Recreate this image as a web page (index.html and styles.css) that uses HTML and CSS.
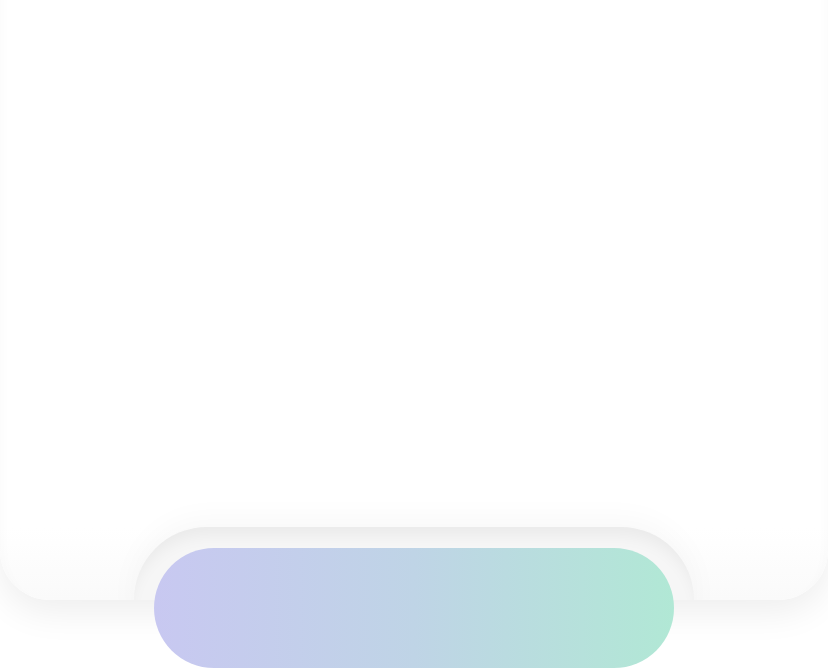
FILE: index.html
```html
<!DOCTYPE html>
<html>
<head>
<meta charset="utf-8">
<link rel="stylesheet" href="styles.css">
</head>
<body>
<div class="page">
  <div class="card">
    <div class="notch"></div>
  </div>
  <div class="action"></div>
</div>
</body>
</html>
```
FILE: styles.css
```css
html, body {
  margin: 0;
  padding: 0;
  background: #ffffff;
}
.page {
  width: 828px;
  height: 668px;
  overflow: hidden;
  display: flex;
  flex-direction: column;
}
.card {
  height: 600px;
  flex: none;
  background: linear-gradient(180deg, #ffffff 0%, #ffffff 88%, #fafafa 100%);
  border-radius: 0 0 50px 50px;
  box-shadow: 0 12px 36px rgba(0, 0, 0, 0.07), inset 14px 0 10px -10px rgba(0,0,0,0.015), inset -14px 0 10px -10px rgba(0,0,0,0.015);
  overflow: hidden;
  display: flex;
  flex-direction: column;
  justify-content: flex-end;
  align-items: center;
}
.notch {
  width: 560px;
  height: 146px;
  margin-bottom: -73px;
  flex: none;
  border-radius: 73px;
  background: #f6f6f6;
  box-shadow: inset 0 14px 16px -6px rgba(0, 0, 0, 0.05), 0 -8px 30px rgba(0, 0, 0, 0.03);
}
.action {
  position: relative;
  width: 520px;
  height: 120px;
  flex: none;
  margin: -52px auto 0;
  border-radius: 60px;
  background: linear-gradient(90deg, #c8c8f1 0%, #bfd4e6 50%, #b1e8d5 100%);
}
```
